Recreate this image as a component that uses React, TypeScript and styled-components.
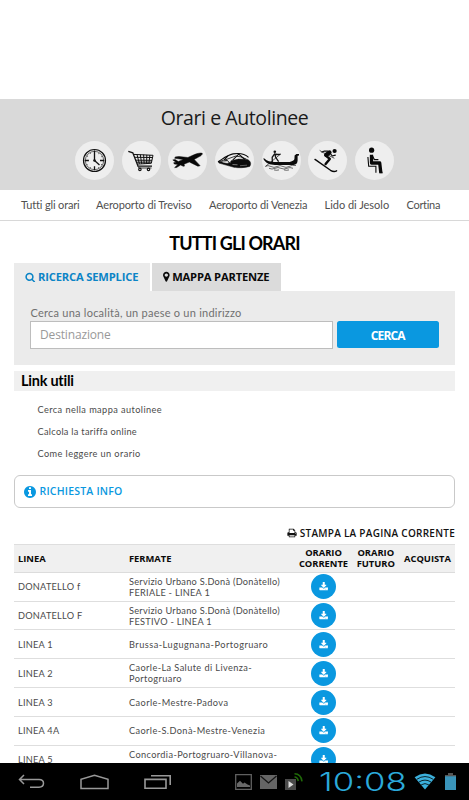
import React from 'react';
import styled, { createGlobalStyle } from 'styled-components';

const BLUE = '#0a98e0';

const GlobalStyle = createGlobalStyle`
  * { box-sizing: border-box; }
  body { margin: 0; background: #fff; color: #4a4a4a; font-family: Lato, sans-serif; overflow: hidden; }
  h1, h2, p, ul { margin: 0; padding: 0; }
`;

const Screen = styled.div`
  display: flex;
  flex-direction: column;
  width: 469px;
  height: 800px;
  overflow: hidden;
`;

const Page = styled.main`
  flex: 1;
  min-height: 0;
  overflow: hidden;
  padding-top: 99px;
`;

const Hero = styled.header`
  height: 91px;
  background: #d9d9d9;
  display: flex;
  flex-direction: column;
  align-items: center;
`;

const HeroTitle = styled.h1`
  font: 400 19.5px/38px 'Open Sans', sans-serif;
  letter-spacing: -0.41px;
  color: #1a1a1a;
  height: 42px;
`;

const Shortcuts = styled.div`
  display: flex;
  gap: 7.7px;
`;

const Shortcut = styled.a`
  width: 39px;
  height: 39px;
  border-radius: 50%;
  background: #eee;
  svg { display: block; width: 39px; height: 39px; }
`;

const Nav = styled.nav`
  height: 31px;
  padding: 0 0 1px 21px;
  border-bottom: 1px solid #d8d8d8;
  display: flex;
  align-items: center;
  gap: 16.5px;
`;

const NavLink = styled.a<{ $width: number; $track: number }>`
  width: ${p => p.$width}px;
  font-size: 11px;
  letter-spacing: ${p => p.$track}px;
  white-space: nowrap;
  color: #505050;
`;

const Heading = styled.h2`
  height: 42px;
  text-align: center;
  font: 700 18px/44px Lato, sans-serif;
  letter-spacing: -0.85px;
  color: #000;
`;

const Content = styled.div`
  margin: 0 14px;
`;

const Tabs = styled.div`
  display: flex;
  gap: 2px;
  height: 28px;
`;

const Tab = styled.button<{ $active?: boolean; $width: number }>`
  width: ${p => p.$width}px;
  border: 0;
  padding: 0 0 0 11px;
  display: flex;
  align-items: center;
  gap: 2.5px;
  background: ${p => (p.$active ? '#ebebeb' : '#dbdbdb')};
  color: ${p => (p.$active ? '#0b84c6' : '#0a0a0a')};
  font: 700 11.2px/28px 'Open Sans', sans-serif;
  letter-spacing: -0.17px;
  white-space: nowrap;
`;

const SearchPanel = styled.form`
  height: 74px;
  background: #ebebeb;
  padding: 14px 16px 0;
`;

const FieldLabel = styled.label`
  display: block;
  font-size: 11px;
  line-height: 16px;
  letter-spacing: 0.24px;
  color: #707070;
  padding-left: 0.5px;
`;

const FieldRow = styled.div`
  display: flex;
  gap: 4px;
  align-items: flex-start;
`;

const Field = styled.input`
  width: 303px;
  height: 28px;
  border: 1px solid #bdbdbd;
  background: #fff;
  padding: 0 9px 1px;
  font: 400 12px 'Open Sans', sans-serif;
  letter-spacing: -0.15px;
  outline: 0;
  &::placeholder { color: #999; opacity: 1; }
`;

const SearchButton = styled.button`
  width: 101.5px;
  height: 27px;
  border: 0;
  border-radius: 2.5px;
  background: ${BLUE};
  color: #fff;
  font: 700 12px/28px 'Open Sans', sans-serif;
  letter-spacing: -0.85px;
  padding: 1px 0 0;
`;

const LinksTitle = styled.h2`
  margin-top: 6px;
  height: 20px;
  padding-left: 7px;
  background: #f0f0f0;
  font: 700 14.5px/20px Lato, sans-serif;
  letter-spacing: -0.25px;
  color: #000;
`;

const LinkList = styled.ul`
  list-style: none;
  padding: 7.5px 0 0 23.5px;
  height: 84px;
`;

const LinkItem = styled.li<{ $track: number }>`
  height: 22px;
  font-size: 9.2px;
  line-height: 22px;
  letter-spacing: ${p => p.$track}px;
`;

const InfoBox = styled.a`
  height: 33px;
  border: 1px solid #c9c9c9;
  border-radius: 6px;
  display: flex;
  align-items: center;
  padding-left: 7.5px;
  gap: 3px;
  color: ${BLUE};
  font: 600 10.5px/31px 'Open Sans', sans-serif;
  letter-spacing: 0.2px;
`;

const PrintLink = styled.a`
  height: 36px;
  padding-top: 13px;
  display: flex;
  align-items: center;
  justify-content: flex-end;
  gap: 2.5px;
  color: #111;
  font: 600 10px/20px 'Open Sans', sans-serif;
  letter-spacing: 0.26px;
`;

const COLUMNS = '115px 166.5px 56px 48.5px 55px';

const TableHead = styled.div`
  display: grid;
  grid-template-columns: ${COLUMNS};
  align-items: center;
  height: 28.8px;
  background: #f0f0f0;
  border-top: 1px solid #dedede;
  border-bottom: 1px solid #dcdcdc;
  font: 700 9.4px/11px 'Open Sans', sans-serif;
  letter-spacing: -0.03px;
  color: #0a0a0a;
`;

const HeadCell = styled.span<{ $center?: boolean; $inset?: boolean }>`
  text-align: ${p => (p.$center ? 'center' : 'left')};
  padding-left: ${p => (p.$inset ? 4 : 0)}px;
`;

const Row = styled.div`
  display: grid;
  grid-template-columns: ${COLUMNS};
  align-items: center;
  height: 28.85px;
  border-bottom: 1px solid #dedede;
  font-size: 9.2px;
  line-height: 11px;
`;

const LineName = styled.span`
  padding-left: 4px;
  letter-spacing: 0.24px;
`;

const Stops = styled.span<{ $track: number }>`
  letter-spacing: ${p => p.$track}px;
  white-space: nowrap;
`;

const StopLine = styled.span`
  display: block;
`;

const DownloadButton = styled.a`
  justify-self: center;
  width: 25px;
  height: 25px;
  border-radius: 50%;
  background: ${BLUE};
  color: #fff;
  display: flex;
  align-items: center;
  justify-content: center;
`;

const Glyph = styled.svg<{ $size: number; $width?: number }>`
  width: ${p => p.$width ?? p.$size}px;
  height: ${p => p.$size}px;
  fill: currentColor;
  flex: none;
`;

const SystemBar = styled.footer`
  height: 37px;
  background: #000;
  display: flex;
  align-items: center;
  justify-content: space-between;
  padding: 0 12.5px 0 18px;
`;

const SystemGroup = styled.div<{ $gap: number }>`
  display: flex;
  align-items: center;
  gap: ${p => p.$gap}px;
  svg { display: block; }
`;

const ClockSlot = styled.div`
  width: 88px;
  height: 37px;
  margin: 0 -1px 0 7px;
`;

const Clock = styled.div`
  width: 60px;
  font: 300 25px/38px Inter, sans-serif;
  color: #2ba9da;
  transform: scaleX(1.39);
  transform-origin: left;
  white-space: nowrap;
`;

const ICONS = {
  search: 'M1216 832q0-185-131.5-316.5t-316.5-131.5-316.5 131.5-131.5 316.5 131.5 316.5 316.5 131.5 316.5-131.5 131.5-316.5zm512 832q0 52-38 90t-90 38q-54 0-90-38l-343-342q-179 124-399 124-143 0-273.5-55.5t-225-150-150-225-55.5-273.5 55.5-273.5 150-225 225-150 273.5-55.5 273.5 55.5 225 150 150 225 55.5 273.5q0 220-124 399l343 343q37 37 37 90z',
  pin: 'M1152 640q0-106-75-181t-181-75-181 75-75 181 75 181 181 75 181-75 75-181zm256 0q0 109-33 179l-364 774q-16 33-47.5 52t-67.5 19-67.5-19-46.5-52l-365-774q-33-70-33-179 0-212 150-362t362-150 362 150 150 362z',
  print: 'M448 1536h896v-256h-896v256zm0-640h896v-384h-160q-40 0-68-28t-28-68v-160h-640v640zm1152 64q0-26-19-45t-45-19-45 19-19 45 19 45 45 19 45-19 19-45zm128 0v416q0 13-9.5 22.5t-22.5 9.5h-224v160q0 40-28 68t-68 28h-960q-40 0-68-28t-28-68v-160h-224q-13 0-22.5-9.5t-9.5-22.5v-416q0-79 56.5-135.5t135.5-56.5h64v-544q0-40 28-68t68-28h672q40 0 88 20t76 48l152 152q28 28 48 76t20 88v256h64q79 0 135.5 56.5t56.5 135.5z',
  download: 'M1344 1344q0-26-19-45t-45-19-45 19-19 45 19 45 45 19 45-19 19-45zm256 0q0-26-19-45t-45-19-45 19-19 45 19 45 45 19 45-19 19-45zm128-224v320q0 40-28 68t-68 28h-1472q-40 0-68-28t-28-68v-320q0-40 28-68t68-28h465l135 136q58 56 136 56t136-56l136-136h464q40 0 68 28t28 68zm-325-569q17 41-14 70l-448 448q-18 19-45 19t-45-19l-448-448q-31-29-14-70 17-39 59-39h256v-448q0-26 19-45t45-19h256q26 0 45 19t19 45v448h256q42 0 59 39z',
  info: 'M1152 1376v-160q0-14-9-23t-23-9h-96v-512q0-14-9-23t-23-9h-320q-14 0-23 9t-9 23v160q0 14 9 23t23 9h96v320h-96q-14 0-23 9t-9 23v160q0 14 9 23t23 9h448q14 0 23-9t9-23zm-128-896v-160q0-14-9-23t-23-9h-192q-14 0-23 9t-9 23v160q0 14 9 23t23 9h192q14 0 23-9t9-23zm640 416q0 209-103 385.5t-279.5 279.5-385.5 103-385.5-103-279.5-279.5-103-385.5 103-385.5 279.5-279.5 385.5-103 385.5 103 279.5 279.5 103 385.5z',
};

const Icon = ({ name, size }: { name: keyof typeof ICONS; size: number }) => (
  <Glyph
    $size={size}
    $width={name === 'pin' ? size * 0.58 : size}
    viewBox={name === 'pin' ? '384 0 1024 1792' : '0 0 1792 1792'}
  >
    <path d={ICONS[name]} />
  </Glyph>
);

const ClockIcon = () => (
  <svg viewBox="0 0 39 39" fill="none" stroke="#111">
    <circle cx="19.5" cy="19.5" r="11" strokeWidth="1.2" />
    <circle cx="19.5" cy="19.5" r="9.2" strokeWidth=".6" />
    <circle cx="19.5" cy="19.5" r="8.3" strokeWidth="1.4" strokeDasharray=".5 3.846" strokeDashoffset=".25" />
    <path d="M19.5 9.5v10l5 4.5M9.7 19.5h4.2M25 19.5h4.3M19.5 25.2v4" strokeWidth="1.3" />
    <circle cx="19.5" cy="19.5" r="1.3" fill="#111" stroke="none" />
  </svg>
);

const CartIcon = () => (
  <svg viewBox="0 0 39 39" fill="none" stroke="#111">
    <path d="M6.3 10.4l4.5 1.4 5.2 13.4h14" strokeWidth="1.3" />
    <path d="M11.8 13.4l19.2.9-1.7 8-14.3.8M12.8 16.3l17.7.2M13.8 19.2l16.2.1M14.5 21.2l15-.1M15 13.5l2.4 9.4M18.3 13.6l1.4 9.3M21.6 13.7l.6 9.2M24.8 13.9l-.2 8.8M27.9 14l-1 8.6" strokeWidth="1" />
    <path d="M16 25.5l1 1.5h12.5" strokeWidth=".8" />
    <circle cx="17.9" cy="28.4" r="1.2" strokeWidth="1.2" />
    <circle cx="26.5" cy="28.4" r="1.2" strokeWidth="1.2" />
  </svg>
);

const PlaneIcon = () => (
  <svg viewBox="0 0 39 39" fill="#080808" stroke="#080808" strokeWidth=".5">
    <path d="M4.8 18.9l2.3-.4 3.2 2 5-2-8.6-1.2.6-1.4 3.6-.4 9 1 6-2.7c3-1.2 6.3-2.2 8.3-1.5.8 1-1.4 2.7-3.7 3.8l-4.3 2.3 5.9 6.3-2.2.5-8.6-4.2-5.3 2.2.5 1.9-1.2.2-2.7-1.3-4 2.5-2 .1 3.3-3.2-3.6-.4-.6-1.3 2.3-.5z" />
  </svg>
);

const TrainIcon = () => (
  <svg viewBox="0 0 39 39" fill="none" stroke="#0a0a0a">
    <path d="M3 20.8c4-2.3 9-6.7 15-7.9 7-1.2 12 .1 15.5 3.5" strokeWidth="1.1" />
    <path d="M3 20.8l8.2-2.3 9.3-3.4 5 .7 5.8 2.2" strokeWidth=".8" />
    <path d="M24.2 12.6l-6.5 6.6M23.5 12.8l6.3 5.7M13 14.8l-4 4.3" strokeWidth="1.1" />
    <path d="M16 19.8l7.5-1.7 8.8.3c3.2 1.3 4.3 4.4 2.4 7-4.5 1.5-12 1.6-15.7.9L4 22.1l-.5-1.3 5.2-.2 3-2 3.5 3.6z" fill="#0a0a0a" strokeWidth=".5" />
    <path d="M7.5 20.9l5-.9.9 2-2.2-.1zM17.5 23.5l5 .3" fill="#ddd" stroke="#ddd" strokeWidth=".5" />
    <path d="M25 24.7l7-.5" stroke="#aaa" strokeWidth=".5" />
  </svg>
);

const GondolaIcon = () => (
  <svg viewBox="0 0 39 39" fill="none" stroke="#111">
    <path d="M1.2 17.6l1.2-.2c2.7 2.8 6 3.2 10.6 3.6l12 .1c4 0 6.3-.9 7.4-2.8l.2-3.8 1.8-1.6h2.6v1.5l-1.4.3v4.7c0 2.6-1.6 4.2-4.2 4.6H13c-5 0-9.5-1.6-11.8-6.4z" fill="#0a0a0a" stroke="none" />
    <circle cx="12.8" cy="10.7" r="1.3" fill="#111" stroke="none" />
    <path d="M12.8 12.7l-2.6 3.6.1 5M13 12.7l.5 3.3 3.1 4.6M12 13l3.5.5 3-.2" strokeWidth="1.3" />
    <path d="M18.6 13L4 25" strokeWidth=".7" />
    <path d="M3 25.5q3-1.8 6 0t6 0 6 0 6 0 7-1M7 27.3q3 1.5 6 0t6 0 6 0 6 0M12 28.9q2.5.8 5 0M22 28.9q2.5.8 5 0" strokeWidth=".6" />
  </svg>
);

const SkiIcon = () => (
  <svg viewBox="0 0 39 39" fill="none" stroke="#080808" strokeLinecap="round" strokeLinejoin="round">
    <circle cx="26.6" cy="10" r="2.1" fill="#080808" stroke="none" />
    <path d="M21.5 11.5l-3.2 2.3" strokeWidth="4.2" />
    <path d="M17.3 14.3l4.5 3.6-4.2 5.2" strokeWidth="2.4" />
    <path d="M20 10.2l-3.5-.2-2.6 1M22 12l2.3 3 3-.8" strokeWidth="1.2" />
    <path d="M12 9.6l1.7 1.2L26 17.1" strokeWidth=".7" />
    <path d="M7 18.4L22.5 29.3q3.3 2 6.1.5" strokeWidth="1.4" />
  </svg>
);

const SeatIcon = () => (
  <svg viewBox="0 0 39 39" fill="none" stroke="#080808">
    <circle cx="16.6" cy="9.2" r="2.6" fill="#080808" stroke="none" />
    <path d="M16.5 13.8v8.2h8.2l1.1 9.5" strokeWidth="3.3" strokeLinejoin="round" />
    <path d="M17 14l2.4 4.7h4" strokeWidth="1.3" />
    <path d="M12.9 16l.8 9.3h7.2v6.5" strokeWidth="1.1" />
    <path d="M24.3 31.6h3.3" strokeWidth="1.5" />
  </svg>
);

const SHORTCUTS = [ClockIcon, CartIcon, PlaneIcon, TrainIcon, GondolaIcon, SkiIcon, SeatIcon];

const NAV = [
  { label: 'Tutti gli orari', width: 58.5, track: -0.15 },
  { label: 'Aeroporto di Treviso', width: 96.5, track: -0.11 },
  { label: 'Aeroporto di Venezia', width: 99, track: -0.14 },
  { label: 'Lido di Jesolo', width: 65.5, track: -0.02 },
  { label: 'Cortina', width: 34, track: -0.3 },
];

const LINKS = [
  { label: 'Cerca nella mappa autolinee', track: 0.42 },
  { label: 'Calcola la tariffa online', track: 0.3 },
  { label: 'Come leggere un orario', track: 0.41 },
];

const ROUTES = [
  { name: 'DONATELLO f', stops: ['Servizio Urbano S.Donà (Donàtello)', 'FERIALE - LINEA 1'], track: 0.27 },
  { name: 'DONATELLO F', stops: ['Servizio Urbano S.Donà (Donàtello)', 'FESTIVO - LINEA 1'], track: 0.27 },
  { name: 'LINEA 1', stops: ['Brussa-Lugugnana-Portogruaro'], track: 0.48 },
  { name: 'LINEA 2', stops: ['Caorle-La Salute di Livenza-', 'Portogruaro'], track: 0.4 },
  { name: 'LINEA 3', stops: ['Caorle-Mestre-Padova'], track: 0.42 },
  { name: 'LINEA 4A', stops: ['Caorle-S.Donà-Mestre-Venezia'], track: 0.4 },
  { name: 'LINEA 5', stops: ['Concordia-Portogruaro-Villanova-', '\u00a0'], track: 0.38 },
];

export default function App() {
  return (
    <Screen>
      <GlobalStyle />
      <Page>
        <Hero>
          <HeroTitle>Orari e Autolinee</HeroTitle>
          <Shortcuts>
            {SHORTCUTS.map((Drawing, i) => (
              <Shortcut key={i}><Drawing /></Shortcut>
            ))}
          </Shortcuts>
        </Hero>
        <Nav>
          {NAV.map(n => (
            <NavLink key={n.label} $width={n.width} $track={n.track}>{n.label}</NavLink>
          ))}
        </Nav>
        <Heading>TUTTI GLI ORARI</Heading>
        <Content>
          <Tabs>
            <Tab $active $width={136}><Icon name="search" size={10.5} />RICERCA SEMPLICE</Tab>
            <Tab $width={129}><Icon name="pin" size={11.5} />MAPPA PARTENZE</Tab>
          </Tabs>
          <SearchPanel>
            <FieldLabel htmlFor="destination">Cerca una località, un paese o un indirizzo</FieldLabel>
            <FieldRow>
              <Field id="destination" placeholder="Destinazione" />
              <SearchButton type="button">CERCA</SearchButton>
            </FieldRow>
          </SearchPanel>
          <LinksTitle>Link utili</LinksTitle>
          <LinkList>
            {LINKS.map(l => <LinkItem key={l.label} $track={l.track}>{l.label}</LinkItem>)}
          </LinkList>
          <InfoBox><Icon name="info" size={14} />RICHIESTA INFO</InfoBox>
          <PrintLink><Icon name="print" size={10} />STAMPA LA PAGINA CORRENTE</PrintLink>
          <TableHead>
            <HeadCell $inset>LINEA</HeadCell>
            <HeadCell>FERMATE</HeadCell>
            <HeadCell $center>ORARIO CORRENTE</HeadCell>
            <HeadCell $center>ORARIO FUTURO</HeadCell>
            <HeadCell $center>ACQUISTA</HeadCell>
          </TableHead>
          {ROUTES.map(r => (
            <Row key={r.name}>
              <LineName>{r.name}</LineName>
              <Stops $track={r.track}>
                {r.stops.map(s => <StopLine key={s}>{s}</StopLine>)}
              </Stops>
              <DownloadButton><Icon name="download" size={9.5} /></DownloadButton>
            </Row>
          ))}
        </Content>
      </Page>
      <SystemBar>
        <SystemGroup $gap={35}>
          <svg width="27" height="16" viewBox="0 0 27 16" fill="none" stroke="#999" strokeWidth="1.5">
            <path d="M6 1L1.5 5.5 6 10M1.5 5.5h19.5q4.5 0 4.5 3.8T21 13.2h-9" />
          </svg>
          <svg width="29" height="16" viewBox="0 0 29 16" fill="none" stroke="#999" strokeWidth="1.5">
            <path d="M1 14.5V5.3l13.5-4 13.5 4v9.2z" />
          </svg>
          <svg width="28" height="16" viewBox="0 0 28 16" fill="none" stroke="#999" strokeWidth="1.6">
            <path d="M1 5.4h21v8.8H1zM7 1.8h19.2V11" />
          </svg>
        </SystemGroup>
        <SystemGroup $gap={8}>
          <svg width="17" height="16" viewBox="0 0 17 16">
            <path d="M.7.7h15.6v14.6H.7z" fill="none" stroke="#606060" strokeWidth="1.3" />
            <path d="M2 13V9.5l3-2.8 3 3 1.5-1.2 3 2 2.5 1V13z" fill="#686868" />
          </svg>
          <svg width="17" height="14" viewBox="0 0 17 14">
            <path d="M0 0h17v14H0z" fill="#656565" />
            <path d="M.5 1l8 7 8-7" fill="none" stroke="#151515" strokeWidth="1.3" />
          </svg>
          <svg width="19" height="19" viewBox="0 0 19 19">
            <path d="M0 7h11v11H0z" fill="#4a4a4a" />
            <path d="M3.5 9v7l5-3.5z" fill="#ddd" />
            <path d="M9.5 5q3 0 3.8 4M9.5 1.7Q16 1.8 17 9.3" fill="none" stroke="#1f6a08" strokeWidth="1.6" />
          </svg>
          <ClockSlot><Clock>10:08</Clock></ClockSlot>
          <svg width="22" height="17" viewBox="0 0 22 17">
            <path d="M.6 4.2Q11-3.2 21.4 4.2L11 16.6z" fill="#3bb0dc" />
            <path d="M2.8 6.3q8.2-5.5 16.4 0M5 9q6-3.8 12 0M7.2 11.8q3.8-2.4 7.6 0" fill="none" stroke="#000" strokeWidth=".8" />
          </svg>
          <svg width="13" height="17" viewBox="0 0 13 17">
            <path d="M4 0h5v2h3v2H1V2h3z" fill="#555" />
            <path d="M1 3.3h11V17H1z" fill="#3a94ba" />
          </svg>
        </SystemGroup>
      </SystemBar>
    </Screen>
  );
}
